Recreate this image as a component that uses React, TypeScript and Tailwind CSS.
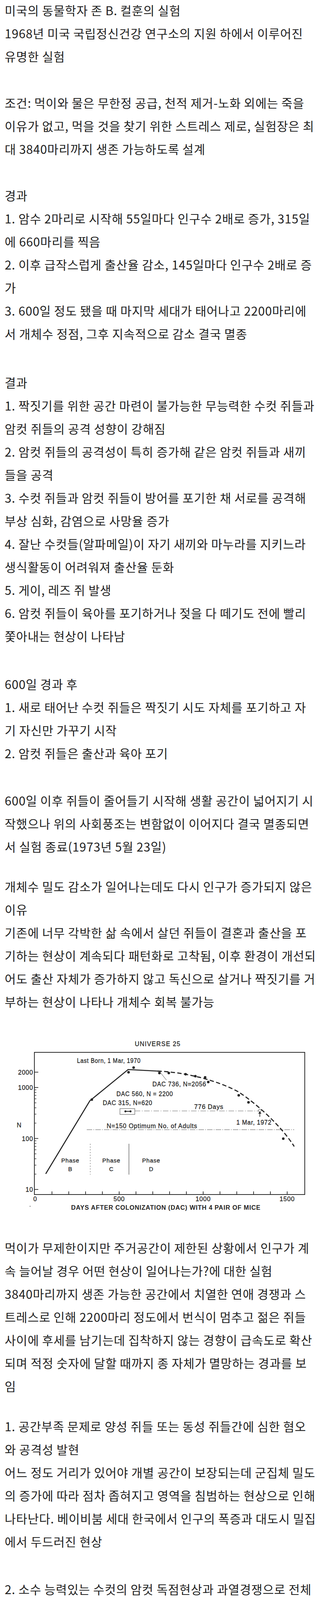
import React from "react";

type Group = { gap: string; lines: string[] };

const before: Group[] = [
  {
    gap: "mt-[-4px]",
    lines: [
      "미국의 동물학자 존 B. 컬훈의 실험",
      "1968년 미국 국립정신건강 연구소의 지원 하에서 이루어진",
      "유명한 실험",
    ],
  },
  {
    gap: "mt-[60px]",
    lines: [
      "조건: 먹이와 물은 무한정 공급, 천적 제거-노화 외에는 죽을",
      "이유가 없고, 먹을 것을 찾기 위한 스트레스 제로, 실험장은 최",
      "대 3840마리까지 생존 가능하도록 설계",
    ],
  },
  {
    gap: "mt-[60px]",
    lines: [
      "경과",
      "1. 암수 2마리로 시작해 55일마다 인구수 2배로 증가, 315일",
      "에 660마리를 찍음",
      "2. 이후 급작스럽게 출산율 감소, 145일마다 인구수 2배로 증",
      "가",
      "3. 600일 정도 됐을 때 마지막 세대가 태어나고 2200마리에",
      "서 개체수 정점, 그후 지속적으로 감소 결국 멸종",
    ],
  },
  {
    gap: "mt-[66px]",
    lines: [
      "결과",
      "1. 짝짓기를 위한 공간 마련이 불가능한 무능력한 수컷 쥐들과",
      "암컷 쥐들의 공격 성향이 강해짐",
      "2. 암컷 쥐들의 공격성이 특히 증가해 같은 암컷 쥐들과 새끼",
      "들을 공격",
      "3. 수컷 쥐들과 암컷 쥐들이 방어를 포기한 채 서로를 공격해",
      "부상 심화, 감염으로 사망율 증가",
      "4. 잘난 수컷들(알파메일)이 자기 새끼와 마누라를 지키느라",
      "생식활동이 어려워져 출산율 둔화",
      "5. 게이, 레즈 쥐 발생",
      "6. 암컷 쥐들이 육아를 포기하거나 젖을 다 떼기도 전에 빨리",
      "쫓아내는 현상이 나타남",
    ],
  },
  {
    gap: "mt-[64px]",
    lines: [
      "600일 경과 후",
      "1. 새로 태어난 수컷 쥐들은 짝짓기 시도 자체를 포기하고 자",
      "기 자신만 가꾸기 시작",
      "2. 암컷 쥐들은 출산과 육아 포기",
    ],
  },
  {
    gap: "mt-[62px]",
    lines: [
      "600일 이후 쥐들이 줄어들기 시작해 생활 공간이 넓어지기 시",
      "작했으나 위의 사회풍조는 변함없이 이어지다 결국 멸종되면",
      "서 실험 종료(1973년 5월 23일)",
    ],
  },
  {
    gap: "mt-[43px]",
    lines: [
      "개체수 밀도 감소가 일어나는데도 다시 인구가 증가되지 않은",
      "이유",
      "기존에 너무 각박한 삶 속에서 살던 쥐들이 결혼과 출산을 포",
      "기하는 현상이 계속되다 패턴화로 고착됨, 이후 환경이 개선되",
      "어도 출산 자체가 증가하지 않고 독신으로 살거나 짝짓기를 거",
      "부하는 현상이 나타나 개체수 회복 불가능",
    ],
  },
];

const after: Group[] = [
  {
    gap: "mt-0",
    lines: [
      "먹이가 무제한이지만 주거공간이 제한된 상황에서 인구가 계",
      "속 늘어날 경우 어떤 현상이 일어나는가?에 대한 실험",
      "3840마리까지 생존 가능한 공간에서 치열한 연애 경쟁과 스",
      "트레스로 인해 2200마리 정도에서 번식이 멈추고 젊은 쥐들",
      "사이에 후세를 남기는데 집착하지 않는 경향이 급속도로 확산",
      "되며 적정 숫자에 달할 때까지 종 자체가 멸망하는 경과를 보",
      "임",
    ],
  },
  {
    gap: "mt-[44px]",
    lines: [
      "1. 공간부족 문제로 양성 쥐들 또는 동성 쥐들간에 심한 혐오",
      "와 공격성 발현",
      "어느 정도 거리가 있어야 개별 공간이 보장되는데 군집체 밀도",
      "의 증가에 따라 점차 좁혀지고 영역을 침범하는 현상으로 인해",
      "나타난다. 베이비붐 세대 한국에서 인구의 폭증과 대도시 밀집",
      "에서 두드러진 현상",
    ],
  },
  {
    gap: "mt-[63px]",
    lines: [
      "2. 소수 능력있는 수컷의 암컷 독점현상과 과열경쟁으로 전체",
      "출산율 급감",
      "공간부족으로 인해 살 자리를 위한 경쟁이 치열해지고 힘있는",
      "수컷들이 공간을 더 확보하는 것이 곧 생존과 삶의 질에 직결",
      "되면서 대다수 암컷 쥐들이 그런 수컷들에게만 몰리는 현상",
    ],
  },
  {
    gap: "mt-[63px]",
    lines: [
      "3. 역으로 연애와 번식을 완전히 포기한 초식형 수컷 쥐 급증",
      "심한 경쟁에서 탈락하거나 격심한 경쟁 자체를 거부하고 평화",
      "로운 삶을 즐기는 성격의 쥐들이 구애를 멈추고, 자기 자신만",
      "을 가꾸거나 그냥 외로이 구석에서 삶을 보내는 현상 급증. 아",
      "무리 예쁜 암컷 쥐를 붙여줘도 성적으로 무반응, 경쟁 거부, 그",
      "냥 먹고 마시고 자고 자신을 가꾸는 것에만 관심을 두는 수컷",
      "쥐 증가",
    ],
  },
  {
    gap: "mt-[72px]",
    lines: [
      "4. 스트레스로 인한 암컷 쥐들의 출산과 양육 포기, 자식 살해",
      "공간과 밀집 문제로 삶이 각박해지니 출산과 양육 자체가 극심",
      "한 경쟁이자 스트레스가 되고 그로 인해 출산을 포기하는 것은",
      "물론 낳은 새끼를 버리거나 포기하는 현상",
    ],
  },
  {
    gap: "mt-[62px]",
    lines: [
      "5. 동성애 증가",
      "이성을 차지하기 위한 경쟁이 극심해지다보니 이성을 싫어해",
      "서 담을 쌓고 동성을 찾는 쥐들이 증가하기 시작",
    ],
  },
];

const Paragraphs = ({ groups }: { groups: Group[] }) => (
  <>
    {groups.map((g, i) => (
      <div key={i} className={g.gap}>
        {g.lines.map((line, j) => (
          <div key={j} className="h-[59px] leading-[59px] whitespace-nowrap">
            {line}
          </div>
        ))}
      </div>
    ))}
  </>
);

// log scale chart, coordinates in px inside the 819x571 drawing
const yN = (n: number) => 452 - 130.5 * Math.log10(n / 10);
const xD = (d: number) => 90 + 0.43 * d;

const dots: [number, number][] = [
  [235, 222], [329, 152], [342, 140], [408, 154], [432, 154], [475, 157],
  [500, 162], [525, 165], [533, 177], [611, 211], [636, 229], [725, 322],
];

const Universe25Chart = () => {
  const ink = "#242424";
  const font = "'Liberation Sans', Arial, sans-serif";
  const minor = [20, 30, 40, 50, 60, 70, 80, 90, 200, 300, 400, 500, 600, 700, 800, 900];
  const days = Array.from({ length: 15 }, (_, i) => (i + 1) * 100);
  const label = { fontSize: 16, stroke: ink, strokeWidth: 0.35 };

  return (
    <svg width="819" height="571" viewBox="0 0 819 571" className="block" fontFamily={font} fill={ink}>
      <text x="345" y="85" {...label} textLength="117" lengthAdjust="spacing">UNIVERSE 25</text>

      {/* frame */}
      <rect x="88" y="101" width="692" height="364" fill="none" stroke={ink} strokeWidth="1.9" />

      {/* y ticks */}
      {[10, 100, 1000, 2000].map((n) => (
        <line key={n} x1="88" x2="98" y1={yN(n)} y2={yN(n)} stroke={ink} strokeWidth="1.7" />
      ))}
      {minor.map((n) => (
        <line key={n} x1="88" x2="93" y1={yN(n)} y2={yN(n)} stroke={ink} strokeWidth="1.3" />
      ))}
      <text x="85" y={yN(2000) + 6} {...label} textAnchor="end">2000</text>
      <text x="85" y={yN(1000) + 6} {...label} textAnchor="end">1000</text>
      <text x="85" y={yN(100) + 6} {...label} textAnchor="end">100</text>
      <text x="85" y={yN(10) + 6} {...label} textAnchor="end">10</text>
      <text x="43" y="293" {...label}>N</text>

      {/* x ticks */}
      {days.map((d) => (
        <line key={d} x1={xD(d)} x2={xD(d)} y1="465" y2="457" stroke={ink} strokeWidth="1.7" />
      ))}
      <text x="90" y="482" {...label} textAnchor="middle">0</text>
      <text x="305" y="482" {...label} textAnchor="middle">500</text>
      <text x="520" y="482" {...label} textAnchor="middle">1000</text>
      <text x="735" y="482" {...label} textAnchor="middle">1500</text>
      <text x="182" y="504" {...label} fontWeight="700" strokeWidth="0" textLength="485" lengthAdjust="spacing">
        DAYS AFTER COLONIZATION (DAC) WITH 4 PAIR OF MICE
      </text>
      <circle cx="77" cy="495" r="1" />

      {/* reference lines */}
      <line x1="222" x2="753" y1="299" y2="299" stroke="#555" strokeWidth="1" strokeDasharray="14 3 2 3" />
      <line x1="345" x2="662" y1="251" y2="251" stroke="#666" strokeWidth="1" strokeDasharray="14 4 2 4" />
      <line x1="231" x2="231" y1="335" y2="414" stroke="#555" strokeWidth="1" strokeDasharray="3 4" />
      <line x1="330" x2="330" y1="335" y2="414" stroke="#444" strokeWidth="1.2" />

      {/* population curve */}
      <polyline points="117,412 230,225 328,145 403,149" fill="none" stroke={ink} strokeWidth="2.6" strokeLinejoin="round" />
      <path
        d="M403 149 C480 152 560 175 610 202 C660 235 720 290 753 342"
        fill="none"
        stroke={ink}
        strokeWidth="2.8"
        strokeDasharray="11 6"
      />
      {dots.map(([x, y], i) => (
        <circle key={i} cx={x} cy={y} r="3.3" />
      ))}

      {/* DAC 315 marker */}
      <rect x="307" y="245" width="38" height="15" fill="none" stroke="#444" strokeWidth="1" />
      <line x1="321" x2="334" y1="252" y2="252" stroke={ink} strokeWidth="2" />
      <circle cx="321" cy="252" r="2.6" />
      <circle cx="334" cy="252" r="2.6" />

      {/* 1 Mar 1972 arrow */}
      <circle cx="665" cy="250" r="3.5" fill="none" stroke="#444" strokeWidth="1" />
      <line x1="665" x2="665" y1="266" y2="254" stroke={ink} strokeWidth="1.6" />
      <path d="M661 258 L665 252 L669 258 Z" />

      {/* DAC 736 leader */}
      <line x1="410" y1="152" x2="426" y2="172" stroke="#444" strokeWidth="1" />

      {/* annotations */}
      <text x="197" y="128" {...label} textLength="163" lengthAdjust="spacingAndGlyphs">Last Born, 1 Mar, 1970</text>
      <text x="390" y="188" {...label} textLength="138" lengthAdjust="spacingAndGlyphs">DAC 736, N=2056</text>
      <text x="298" y="213" {...label} textLength="145" lengthAdjust="spacingAndGlyphs">DAC 560, N = 2200</text>
      <text x="263" y="236" {...label} textLength="127" lengthAdjust="spacingAndGlyphs">DAC 315, N=620</text>
      <text x="497" y="246" {...label} textLength="75" lengthAdjust="spacingAndGlyphs">776 Days</text>
      <text x="273" y="295" {...label} textLength="232" lengthAdjust="spacingAndGlyphs">N=150  Optimum No. of Adults</text>
      <text x="605" y="286" {...label} textLength="90" lengthAdjust="spacingAndGlyphs">1 Mar, 1972</text>

      {[
        [180, "B"],
        [285, "C"],
        [387, "D"],
      ].map(([x, l]) => (
        <g key={l as string}>
          <text x={x} y="383" {...label} fontSize="15" textAnchor="middle">Phase</text>
          <text x={x} y="405" {...label} fontSize="15" textAnchor="middle">{l}</text>
        </g>
      ))}
    </svg>
  );
};

export default function App() {
  return (
    <div className="h-[5371px] w-[819px] overflow-hidden bg-white font-['Noto_Sans_CJK_KR','Noto_Sans',sans-serif] text-[31px] tracking-[0.8px] text-[#222]">
      <div className="flex flex-col pl-3">
        <Paragraphs groups={before} />
      </div>
      <Universe25Chart />
      <div className="flex flex-col pl-3">
        <Paragraphs groups={after} />
      </div>
    </div>
  );
}
